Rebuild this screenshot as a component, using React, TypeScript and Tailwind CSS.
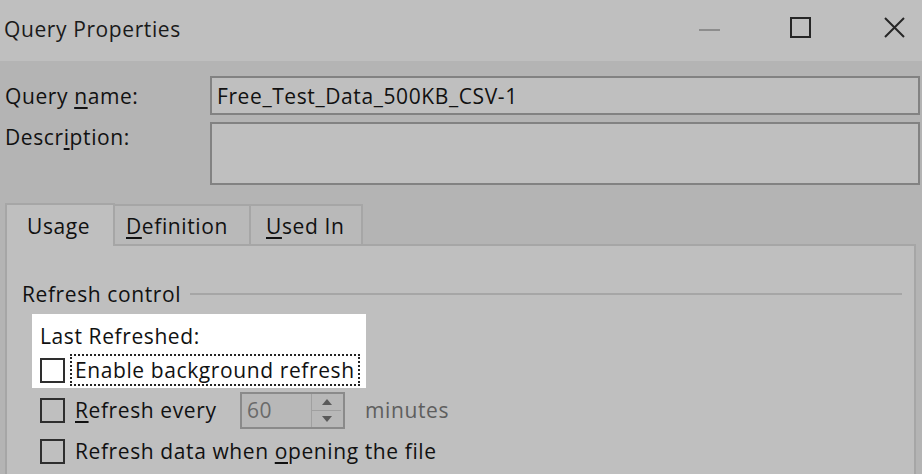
import React from 'react';

const FONT = { fontFamily: '"Open Sans", "Noto Sans", sans-serif' };

function Key({ children }: { children: React.ReactNode }) {
  return <span className="underline underline-offset-[3px] decoration-[2px]">{children}</span>;
}

function Check() {
  return <div className="w-[25px] h-[25px] border-2 border-[#2e2e2e] shrink-0" />;
}

export default function App() {
  return (
    <div className="w-[922px] h-[474px] overflow-hidden bg-[#b4b4b4] text-[#111] text-[21px] tracking-[0.6px]" style={FONT}>
      {/* Title bar */}
      <div className="h-[61px] bg-[#bfbfbf] flex items-center justify-between pl-[4px]">
        <div className="text-[21px] leading-[28px] text-[#1a1a1a] -mt-[3px]">Query Properties</div>
        <div className="flex items-center h-full pr-[17px] -mt-[6px]">
          <div className="w-[21px] h-[2px] bg-[#8d8d8d] mt-[4px]" />
          <div className="ml-[70px] w-[21px] h-[21px] border-2 border-[#262626]" />
          <svg className="ml-[73px]" width="21" height="21" viewBox="0 0 21 21"><path d="M1 1L20 20M20 1L1 20" stroke="#262626" strokeWidth="2" /></svg>
        </div>
      </div>

      {/* Fields */}
      <div className="pl-[5px] pr-[2px] pt-[15px] flex flex-col gap-[7px]">
        <div className="flex items-center">
          <div className="w-[205px] leading-[28px]">Query <Key>n</Key>ame:</div>
          <div className="flex-1 h-[39px] border-2 border-[#828282] bg-[#bfbfbf] flex items-center pl-[5px] leading-[28px]">Free_Test_Data_500KB_CSV-1</div>
        </div>
        <div className="flex items-start">
          <div className="w-[205px] leading-[28px] pt-[1px]">Descr<Key>i</Key>ption:</div>
          <div className="flex-1 h-[63px] border-2 border-[#828282] bg-[#bfbfbf]" />
        </div>
      </div>

      {/* Tabs */}
      <div className="pl-[5px] pr-[6px] mt-[18px]">
        <div className="flex items-end relative z-10 -mb-[2px]">
          <div className="w-[110px] h-[43px] bg-[#bfbfbf] border-2 border-b-0 border-[#a6a6a6] pl-[20px] pt-[7px] leading-[28px]">Usa<Key>g</Key>e</div>
          <div className="w-[136px] h-[40px] bg-[#b9b9b9] border-2 border-l-0 border-b-0 border-[#a6a6a6] pl-[11px] pt-[6px] leading-[28px] mb-[2px]"><Key>D</Key>efinition</div>
          <div className="w-[112px] h-[40px] bg-[#b9b9b9] border-2 border-l-0 border-b-0 border-[#a6a6a6] pl-[15px] pt-[6px] leading-[28px] mb-[2px]"><Key>U</Key>sed In</div>
        </div>
        <div className="h-[240px] bg-[#bfbfbf] border-2 border-b-0 border-[#a6a6a6] pl-[15px] pt-[34px]">
          <div className="flex items-center">
            <div className="leading-[28px]">Refresh control</div>
            <div className="flex-1 h-[2px] bg-[#a6a6a6] ml-[9px] mr-[12px]" />
          </div>
          <div className="ml-[10px] mt-[6px] w-[334px] h-[74px] bg-white pl-[8px] pt-[8px]">
            <div className="leading-[28px]">Last Refreshed:</div>
            <div className="flex items-center mt-[4px] h-[32px]">
              <Check />
              <div className="ml-[5px] h-[32px] border-2 border-dotted border-[#222] px-[3px] leading-[28px]">Enable back<Key>g</Key>round refresh</div>
            </div>
          </div>
          <div className="ml-[18px] mt-[2px] h-[40px] flex items-center">
            <Check />
            <div className="ml-[10px] w-[165px] leading-[28px]"><Key>R</Key>efresh every</div>
            <div className="w-[105px] h-[37px] border-2 border-[#8a8a8a] bg-[#b8b8b8] flex">
              <div className="flex-1 pl-[5px] leading-[33px] text-[#6a6a6a]">60</div>
              <div className="w-[30px] flex flex-col border-l border-[#a0a0a0] mr-[2px]">
                <div className="flex-1 flex items-center justify-center border-b border-[#a0a0a0]">
                  <svg width="10" height="6" viewBox="0 0 10 6"><path d="M5 0L10 6H0Z" fill="#5a5a5a" /></svg>
                </div>
                <div className="flex-1 flex items-center justify-center">
                  <svg width="10" height="6" viewBox="0 0 10 6"><path d="M0 0H10L5 6Z" fill="#5a5a5a" /></svg>
                </div>
              </div>
            </div>
            <div className="ml-[20px] leading-[28px] text-[#5e5e5e]">minutes</div>
          </div>
          <div className="ml-[18px] mt-[5px] h-[32px] flex items-center">
            <Check />
            <div className="ml-[10px] leading-[28px]">Refresh data when <Key>o</Key>pening the file</div>
          </div>
        </div>
      </div>
    </div>
  );
}
